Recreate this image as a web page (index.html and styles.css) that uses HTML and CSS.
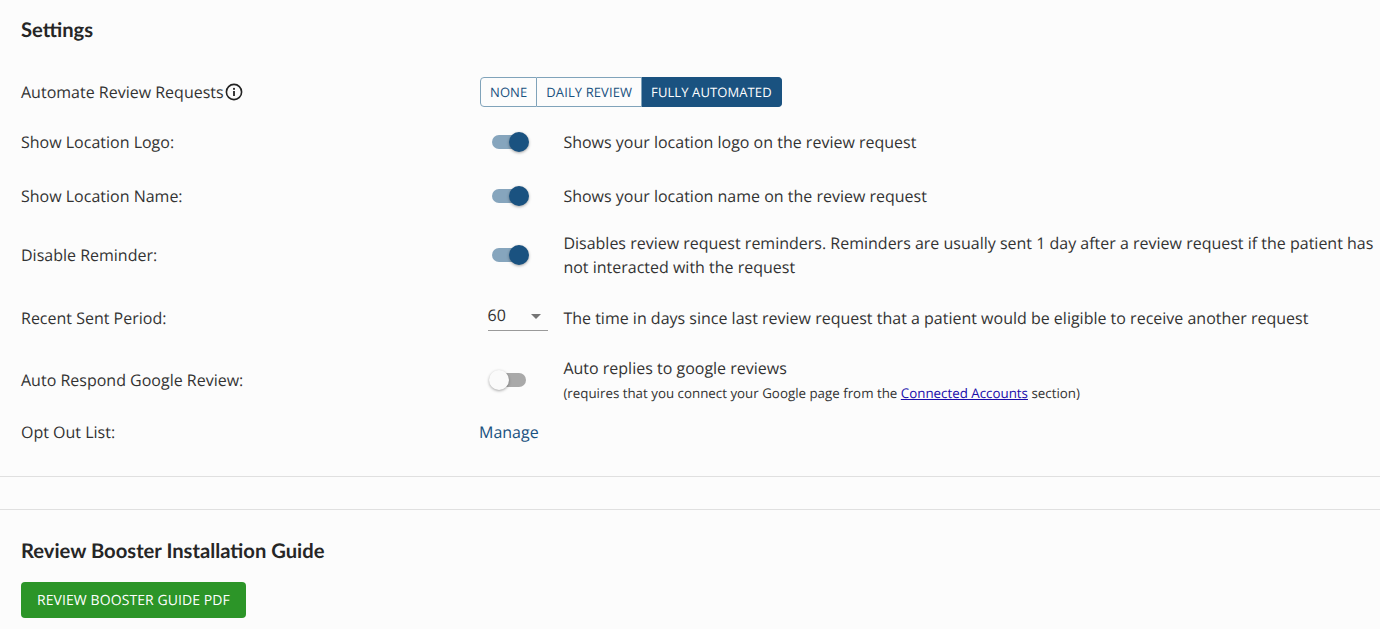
FILE: index.html
```html
<!DOCTYPE html>
<html lang="en">
<head>
    <meta charset="UTF-8">
    <title>Review Booster Settings</title>
    <link rel="stylesheet" href="styles.css">
</head>
<body>

    <div class="settings">
        <h2 class="section-title">Settings</h2>

        <div class="setting-row row-automate">
            <div class="setting-label">
                Automate Review Requests
                <svg class="info-icon" viewBox="0 0 18 18" width="18" height="18">
                    <circle cx="9" cy="9" r="7.6" fill="none" stroke="#222" stroke-width="1.6"/>
                    <rect x="8.1" y="8" width="1.8" height="5" fill="#222"/>
                    <rect x="8.1" y="4.9" width="1.8" height="1.9" fill="#222"/>
                </svg>
            </div>
            <div class="btn-group">
                <button class="group-btn">NONE</button>
                <button class="group-btn">DAILY REVIEW</button>
                <button class="group-btn active">FULLY AUTOMATED</button>
            </div>
        </div>

        <div class="setting-row row-logo">
            <div class="setting-label">Show Location Logo:</div>
            <div class="setting-control"><span class="toggle on"></span></div>
            <div class="setting-desc">Shows your location logo on the review request</div>
        </div>

        <div class="setting-row row-name">
            <div class="setting-label">Show Location Name:</div>
            <div class="setting-control"><span class="toggle on"></span></div>
            <div class="setting-desc">Shows your location name on the review request</div>
        </div>

        <div class="setting-row row-reminder">
            <div class="setting-label">Disable Reminder:</div>
            <div class="setting-control"><span class="toggle on"></span></div>
            <div class="setting-desc">Disables review request reminders. Reminders are usually sent 1 day after a review request if the patient has not interacted with the request</div>
        </div>

        <div class="setting-row row-period">
            <div class="setting-label">Recent Sent Period:</div>
            <div class="setting-control">
                <div class="select-box">
                    <span>60</span>
                    <span class="select-arrow"></span>
                </div>
            </div>
            <div class="setting-desc">The time in days since last review request that a patient would be eligible to receive another request</div>
        </div>

        <div class="setting-row row-google">
            <div class="setting-label">Auto Respond Google Review:</div>
            <div class="setting-control"><span class="toggle"></span></div>
            <div class="setting-desc">
                Auto replies to google reviews
                <small class="setting-note">(requires that you connect your Google page from the <a href="#">Connected Accounts</a> section)</small>
            </div>
        </div>

        <div class="setting-row row-optout">
            <div class="setting-label">Opt Out List:</div>
            <div class="setting-control"><a class="manage-link" href="#">Manage</a></div>
        </div>
    </div>

    <hr class="divider divider-first">
    <hr class="divider divider-second">

    <div class="guide">
        <h2 class="section-title">Review Booster Installation Guide</h2>
        <a class="guide-btn" href="#">REVIEW BOOSTER GUIDE PDF</a>
    </div>

</body>
</html>
```

FILE: styles.css
```css
html, body {
    height: 100%;
    overflow: hidden;
}

body {
    margin: 0;
    font-family: "Open Sans", sans-serif;
    font-size: 16px;
    text-rendering: geometricPrecision;
    background-color: #fcfcfc;
    color: #333;
}

.settings {
    padding: 18px 0 0 21px;
}

.section-title {
    margin: 0;
    font-family: Lato, sans-serif;
    font-size: 20.2px;
    font-weight: 700;
    line-height: 24px;
    color: #262626;
}

.setting-row {
    display: grid;
    grid-template-columns: 459px 83.4px 1fr;
    align-items: center;
    line-height: 24px;
}

.row-automate {
    margin-top: 35px;
    height: 30px;
    margin-bottom: 8px;
}

.row-logo, .row-name {
    height: 54px;
}

.row-reminder {
    height: 64px;
}

.row-period, .row-google {
    height: 62px;
}

.row-optout {
    height: 42px;
}

.setting-label {
    display: flex;
    align-items: center;
}

.info-icon {
    margin-left: 1px;
}

.btn-group {
    display: flex;
    grid-column: 2 / 4;
    height: 30px;
}

.group-btn {
    padding: 0 9px;
    border: 1px solid #80a3ba;
    border-left: none;
    background-color: transparent;
    color: #1a5280;
    font-family: "Open Sans", sans-serif;
    font-size: 13px;
    font-weight: 500;
    letter-spacing: 0.1px;
    text-rendering: geometricPrecision;
}

.group-btn:first-child {
    border-left: 1px solid #80a3ba;
    border-radius: 4px 0 0 4px;
}

.group-btn.active {
    background-color: #1a5280;
    border-color: #1a5280;
    border-radius: 0 4px 4px 0;
    color: #fff;
}

.toggle {
    display: block;
    position: relative;
    width: 34px;
    height: 14px;
    margin-left: 12px;
    border-radius: 7px;
    background-color: #a9a9a9;
}

.toggle::after {
    content: "";
    position: absolute;
    top: -3px;
    left: -3px;
    width: 20px;
    height: 20px;
    border-radius: 50%;
    background-color: #fafafa;
    box-shadow: 0 1px 3px rgba(0,0,0,0.35);
}

.toggle.on {
    background-color: #86a5bd;
}

.toggle.on::after {
    left: 17px;
    background-color: #1a5280;
}

.select-box {
    display: flex;
    justify-content: space-between;
    align-items: center;
    box-sizing: border-box;
    width: 60.5px;
    height: 32px;
    margin: -6px 0 0 7.5px;
    border-bottom: 1px solid #9a9a9a;
    color: #333;
}

.select-arrow {
    width: 0;
    height: 0;
    margin: 3px 7px 0 0;
    border-left: 5px solid transparent;
    border-right: 5px solid transparent;
    border-top: 5px solid #757575;
}

.setting-desc {
    line-height: 24px;
}

.setting-note {
    display: block;
    font-size: 13.33px;
    line-height: 20px;
    margin-top: 3px;
    margin-bottom: 1px;
}

.setting-note a {
    color: #1a0dab;
}

.manage-link {
    margin-left: -1px;
    color: #1a5280;
    text-decoration: none;
}

.divider {
    margin: 0;
    border: none;
    border-top: 1px solid #e0e0e0;
}

.divider-first {
    margin-top: 23px;
}

.divider-second {
    margin-top: 32px;
}

.guide {
    padding: 29px 0 0 21px;
}

.guide-btn {
    display: inline-block;
    margin-top: 19px;
    padding: 0 16px;
    height: 36px;
    line-height: 38px;
    border-radius: 4px;
    background-color: #2c9528;
    color: #fff;
    font-size: 14px;
    letter-spacing: 0.08px;
    text-decoration: none;
}
```
